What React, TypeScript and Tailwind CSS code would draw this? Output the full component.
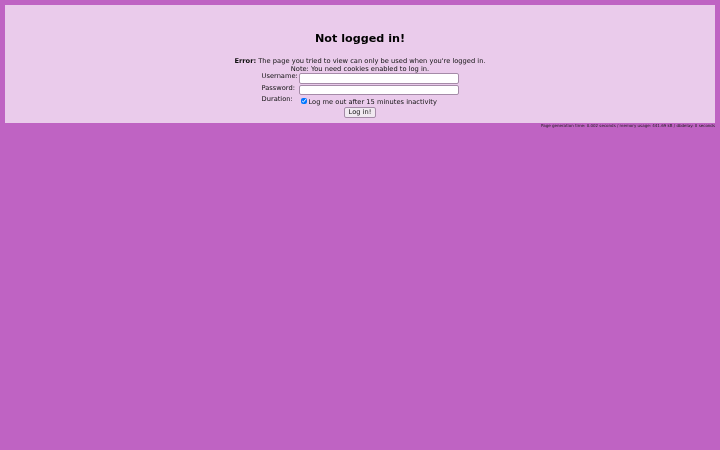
import React from 'react';

const font = "font-['DejaVu_Sans',sans-serif]";

export default function App() {
  return (
    <div className={`min-h-[450px] bg-[#bf63c3] px-[5px] pt-[5px] text-[6.7px] text-[#111] ${font}`}>
      <div className="h-[118px] bg-[#eacbeb]">
        <div className="flex flex-col items-center pt-[27px] will-change-transform">
          <h1 className="text-[11.2px] leading-[14px] font-bold text-black">Not logged in!</h1>
          <p className="mt-[11px] leading-[8px]">
            <b>Error:</b> The page you tried to view can only be used when you're logged in.
          </p>
          <p className="leading-[8px]">Note: You need cookies enabled to log in.</p>
          <form className="flex flex-col items-center">
            <div className="grid w-[197px] grid-cols-[37px_160px]">
              <label className="h-[11.5px] leading-[7px]">Username:</label>
              <input className="h-[10.5px] w-[160px] rounded-[2px] border border-[#a58ba8] bg-white" />
              <label className="h-[11px] leading-[6.5px]">Password:</label>
              <input className="h-[10.5px] w-[160px] rounded-[2px] border border-[#a58ba8] bg-white" />
              <label className="leading-[7.5px]">Duration:</label>
              <div className="mt-[1.5px] flex h-[9.5px] items-center whitespace-nowrap">
                <input type="checkbox" defaultChecked className="mt-[-1.5px] mr-[1.5px] ml-[2px] size-[6.5px] accent-[#0075ff]" />
                <span>Log me out after 15 minutes inactivity</span>
              </div>
            </div>
            <button type="button" className="h-[11px] rounded-[2px] border border-[#a58ba8] bg-[#f0e8f0] px-[4px] leading-[8px]">
              Log in!
            </button>
          </form>
        </div>
      </div>
      <div className="pt-[0.5px] text-right text-[4px] leading-[4px] text-[#222] will-change-transform">
        Page generation time: 0.002 seconds / memory usage: 441.69 kB / dbdelay: 0 seconds
      </div>
    </div>
  );
}
